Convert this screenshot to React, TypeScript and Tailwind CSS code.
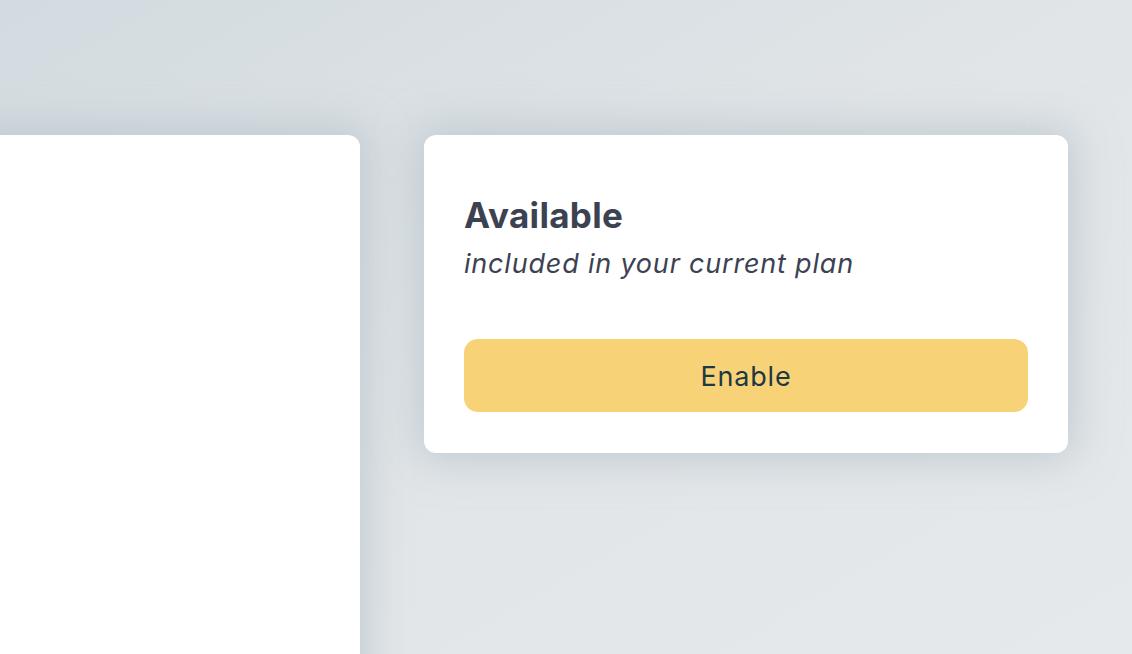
import React from 'react';

const App: React.FC = () => {
  return (
    <div
      className="w-[1132px] h-[654px] overflow-hidden bg-gradient-to-br from-[#d3dbe0] via-[#e1e5e8] to-[#e6e9eb]"
      style={{ fontFamily: 'Inter, "Open Sans", sans-serif' }}
    >
      <div className="flex items-start gap-16 pt-[135px] -ml-[40px]">
        <div className="w-[400px] h-[600px] shrink-0 rounded-xl bg-white shadow-[0_0_40px_8px_rgba(175,188,197,0.6)]" />

        <div className="w-[644px] shrink-0 rounded-xl bg-white px-10 pt-10 pb-[41px] shadow-[0_0_40px_8px_rgba(175,188,197,0.6)]">
          <h2 className="mt-[20px] text-[35px] leading-[40px] font-bold tracking-[0.3px] text-[#3c4252]">Available</h2>
          <p className="mt-[12px] text-[27px] leading-[34px] italic tracking-[0.8px] text-[#3c4252]">
            included in your current plan
          </p>
          <button
            type="button"
            className="mt-[58px] w-full h-[73px] pt-[4px] rounded-[14px] bg-[#f8d277] text-[27px] tracking-[0.8px] text-[#1d3845]"
          >
            Enable
          </button>
        </div>
      </div>
    </div>
  );
};

export default App;
